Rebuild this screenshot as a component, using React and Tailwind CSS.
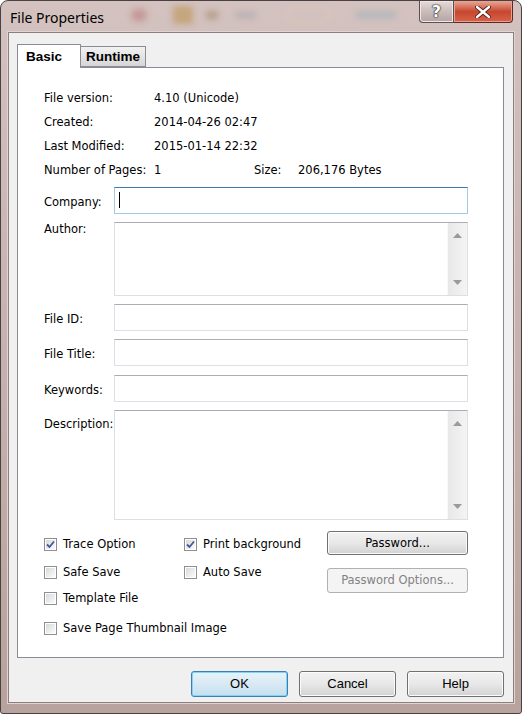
import React from "react";

const label = "font-['DejaVu_Sans',sans-serif] text-[11.5px] leading-[13px] text-black";

const CheckBox = ({ checked, text }) => (
  <div className="flex items-center h-[20px]">
    <span className="w-[13px] h-[13px] border border-[#8e8f8f] bg-white p-px flex">
      <span className="flex-1 bg-gradient-to-br from-[#d8d9dc] to-[#fbfbfb] flex items-center justify-center">
        {checked && (
          <svg width="9" height="9" viewBox="0 0 9 9">
            <path d="M1 4.5 L3.5 7 L8 1.5" fill="none" stroke="#42589a" strokeWidth="1.8" />
          </svg>
        )}
      </span>
    </span>
    <span className={`${label} ml-[6px] pt-px`}>{text}</span>
  </div>
);

const TextBox = ({ focused, className = "" }) => (
  <div
    className={`w-[354px] h-[27px] bg-white border ${
      focused
        ? "border-[#a4c9e3] border-t-[#3d7bad]"
        : "border-[#dbdfe6] border-t-[#abadb3]"
    } ${className}`}
  >
    {focused && <div className="ml-[4px] mt-[4px] w-px h-[16px] bg-black" />}
  </div>
);

const TextArea = ({ h }) => (
  <div className={`w-[354px] ${h} bg-white border border-[#dbdfe6] border-t-[#abadb3] flex justify-end`}>
    <div className="w-[20px] h-full bg-gradient-to-r from-[#e8e8e8] to-[#f4f4f4] border-l border-[#f8f8f8] flex flex-col items-center justify-between py-[10px]">
      <svg width="9" height="5" viewBox="0 0 9 5">
        <path d="M0 5 L4.5 0 L9 5 Z" fill="#9a9a9a" />
      </svg>
      <svg width="9" height="5" viewBox="0 0 9 5">
        <path d="M0 0 L4.5 5 L9 0 Z" fill="#9a9a9a" />
      </svg>
    </div>
  </div>
);

const FormRow = ({ name, children, top = false, labelMt = "" }) => (
  <div className={`flex ${top ? "items-start" : "items-center"}`}>
    <span className={`${label} w-[70px] ${top ? labelMt : "pt-[3px]"}`}>{name}</span>
    {children}
  </div>
);

const Button = ({ children, primary, disabled, className = "" }) => (
  <button
    className={`rounded-[3px] border flex items-center justify-center ${
      primary
        ? "border-[#3c7fb1] bg-gradient-to-b from-[#e8f3f9] to-[#c7dfee] shadow-[inset_0_0_0_1px_#7fd4f7]"
        : disabled
        ? "border-[#adb2b5] bg-[#f4f4f4] text-[#838383]"
        : "border-[#707070] bg-gradient-to-b from-[#f2f2f2] via-[#e8e8e8] to-[#d2d2d2] shadow-[inset_0_0_0_1px_#fbfbfb]"
    } ${className}`}
  >
    {children}
  </button>
);

const InfoRow = ({ children }) => (
  <div className={`${label} flex items-center h-[24px] pt-[2px]`}>{children}</div>
);

export default function App() {
  return (
    <div className="w-[522px] h-[714px] border border-[#4a4242] rounded-t-[8px] rounded-b-[3px] bg-gradient-to-b from-[#d3c2bf] via-[#c5b1ad] to-[#b8a29e] flex flex-col overflow-hidden">
      {/* title bar */}
      <div className="h-[31px] relative flex items-start justify-between pr-[8px]">
        <div className="absolute left-[130px] top-[8px] w-[16px] h-[12px] rounded-full bg-[#b05a5a] opacity-40 blur-[3px]" />
        <div className="absolute left-[172px] top-[5px] w-[20px] h-[18px] bg-[#b88a3a] opacity-50 blur-[3px]" />
        <div className="absolute left-[205px] top-[10px] w-[12px] h-[8px] bg-[#8a6a3a] opacity-40 blur-[3px]" />
        <div className="absolute left-[235px] top-[11px] w-[20px] h-[6px] bg-[#7a8aa0] opacity-30 blur-[3px]" />
        <div className="absolute left-[285px] top-[5px] w-[45px] h-[18px] rounded-full border-2 border-[#e0c8b8] opacity-60 blur-[2px]" />
        <div className="absolute left-[355px] top-[11px] w-[40px] h-[6px] bg-[#7aa5b8] opacity-40 blur-[3px]" />
        <span className="relative ml-[9px] mt-[7px] font-['Noto_Sans',sans-serif] text-[14px] leading-[20px] text-black">
          File Properties
        </span>
        <div className="relative flex">
          <div className="w-[35px] h-[22px] border border-[#5a5050] border-t-0 rounded-bl-[4px] bg-gradient-to-b from-[#e6dcdb] via-[#c9bcbb] to-[#b5a5a4] flex items-center justify-center shadow-[inset_0_0_0_1px_#efe6e5]">
            <span className="font-['DejaVu_Sans',sans-serif] font-bold text-[16px] leading-none text-white [text-shadow:0_0_1px_#222,0_0_1px_#222,0_0_2px_#333]">
              ?
            </span>
          </div>
          <div className="w-[59px] h-[22px] border border-[#5a2a22] border-t-0 border-l-0 rounded-br-[4px] bg-gradient-to-b from-[#e9a798] via-[#c7472f] to-[#d8624a] flex items-center justify-center shadow-[inset_0_0_0_1px_#e8a090]">
            <svg width="16" height="12" viewBox="0 0 16 12">
              <path d="M2 1 L14 11 M14 1 L2 11" stroke="#4a1a14" strokeWidth="4.2" strokeLinecap="round" />
              <path d="M2 1 L14 11 M14 1 L2 11" stroke="#ffffff" strokeWidth="2.4" strokeLinecap="round" />
            </svg>
          </div>
        </div>
      </div>

      {/* client */}
      <div className="flex-1 mx-[7px] mb-[10px] bg-[#f0f0f0] border border-[#8f7f7c] shadow-[0_0_0_1px_#e0d4d2] pt-[11px] pl-[8px] flex flex-col">
        {/* tabs */}
        <div className="flex items-start h-[23px]">
          <div className="relative z-10 w-[64px] h-[24px] bg-white border border-b-0 border-[#898c95] flex items-center pl-[8px]">
            <span className="font-['Liberation_Sans',sans-serif] font-bold text-[13.5px] leading-none">Basic</span>
          </div>
          <div className="mt-[2px] w-[66px] h-[21px] -ml-px bg-gradient-to-b from-[#f2f2f2] to-[#d6d6d6] border border-[#898c95] flex items-center justify-center">
            <span className="font-['Liberation_Sans',sans-serif] font-bold text-[13.5px] leading-none">Runtime</span>
          </div>
        </div>

        {/* panel */}
        <div className="w-[487px] h-[591px] bg-white border border-[#898c95] pt-[17px] pl-[26px]">
          <InfoRow>
            <span className="w-[110px]">File version:</span>
            <span>4.10 (Unicode)</span>
          </InfoRow>
          <InfoRow>
            <span className="w-[110px]">Created:</span>
            <span>2014-04-26 02:47</span>
          </InfoRow>
          <InfoRow>
            <span className="w-[110px]">Last Modified:</span>
            <span>2015-01-14 22:32</span>
          </InfoRow>
          <InfoRow>
            <span className="w-[110px]">Number of Pages:</span>
            <span className="w-[100px]">1</span>
            <span className="w-[44px]">Size:</span>
            <span>206,176 Bytes</span>
          </InfoRow>

          <div className="mt-[6px] flex flex-col">
            <FormRow name="Company:">
              <TextBox focused />
            </FormRow>
            <div className="mt-[8px]">
              <FormRow name="Author:" top labelMt="mt-px">
                <TextArea h="h-[74px]" />
              </FormRow>
            </div>
            <div className="mt-[8px]">
              <FormRow name="File ID:">
                <TextBox />
              </FormRow>
            </div>
            <div className="mt-[8px]">
              <FormRow name="File Title:">
                <TextBox />
              </FormRow>
            </div>
            <div className="mt-[9px]">
              <FormRow name="Keywords:">
                <TextBox />
              </FormRow>
            </div>
            <div className="mt-[8px]">
              <FormRow name="Description:" top labelMt="mt-[8px]">
                <TextArea h="h-[110px]" />
              </FormRow>
            </div>
          </div>

          {/* options */}
          <div className="flex">
            <div className="w-[140px] flex flex-col">
              <div className="mt-[14px]">
                <CheckBox checked text="Trace Option" />
              </div>
              <div className="mt-[8px]">
                <CheckBox text="Safe Save" />
              </div>
              <div className="mt-[6px]">
                <CheckBox text="Template File" />
              </div>
              <div className="mt-[10px] w-[300px]">
                <CheckBox text="Save Page Thumbnail Image" />
              </div>
            </div>
            <div className="w-[143px] flex flex-col">
              <div className="mt-[14px]">
                <CheckBox checked text="Print background" />
              </div>
              <div className="mt-[8px]">
                <CheckBox text="Auto Save" />
              </div>
            </div>
            <div className="flex flex-col">
              <Button className={`mt-[11px] w-[141px] h-[24px] ${label}`}>Password...</Button>
              <Button disabled className="mt-[13px] w-[141px] h-[25px] font-['DejaVu_Sans',sans-serif] text-[11.5px]">
                Password Options...
              </Button>
            </div>
          </div>
        </div>

        {/* dialog buttons */}
        <div className="mt-[13px] w-[487px] flex justify-end gap-[11px]">
          <Button primary className="w-[97px] h-[26px] font-['Liberation_Sans',sans-serif] text-[13px]">OK</Button>
          <Button className="w-[97px] h-[26px] font-['Liberation_Sans',sans-serif] text-[13px]">Cancel</Button>
          <Button className="w-[97px] h-[26px] font-['Liberation_Sans',sans-serif] text-[13px]">Help</Button>
        </div>
      </div>
    </div>
  );
}
